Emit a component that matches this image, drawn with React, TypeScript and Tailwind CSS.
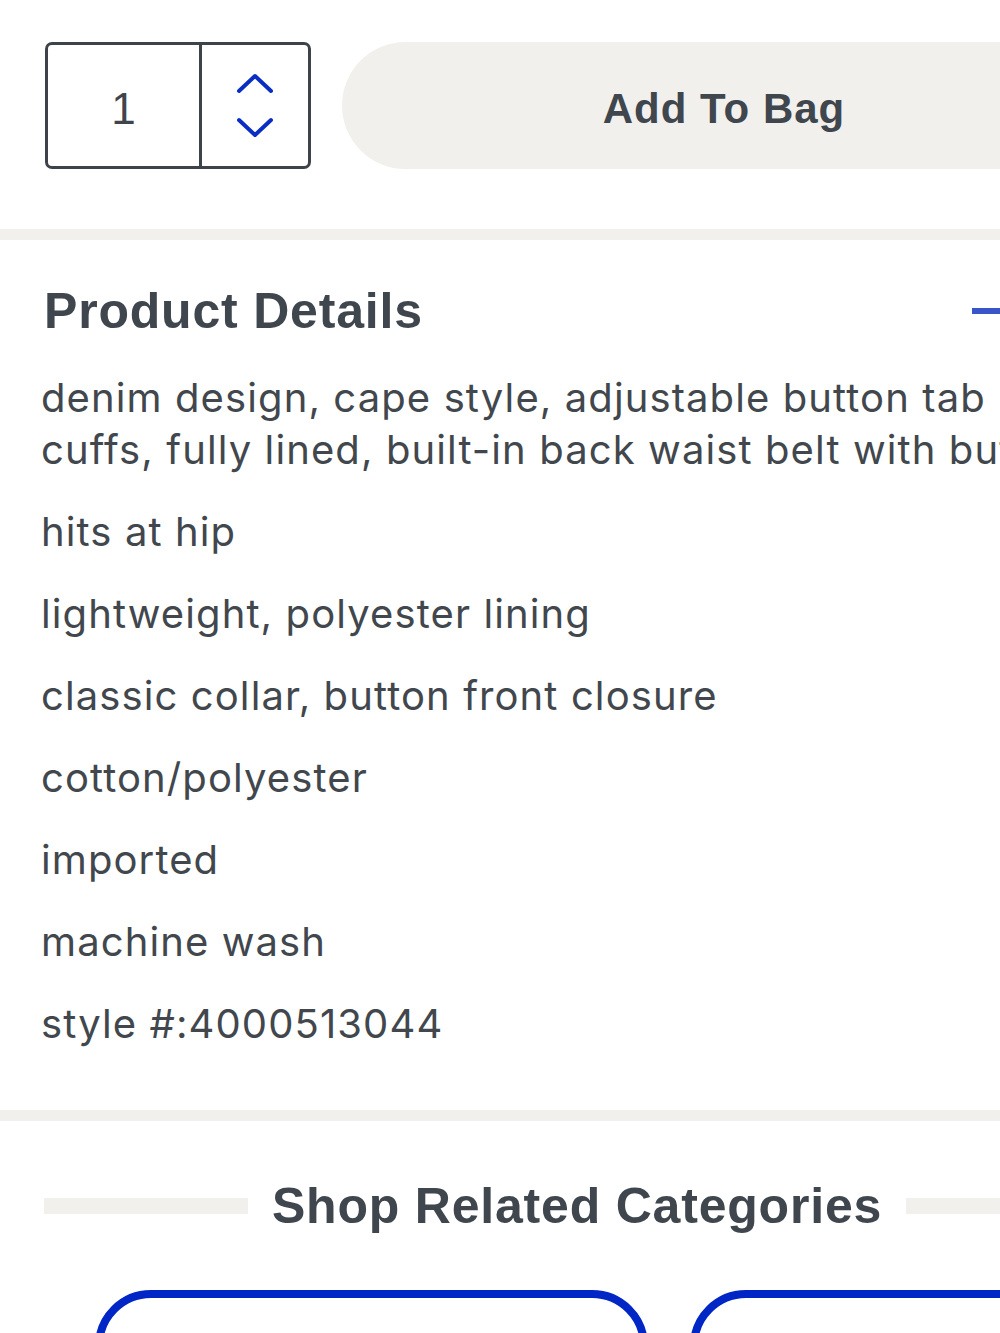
import React from "react";

const items = [
  "hits at hip",
  "lightweight, polyester lining",
  "classic collar, button front closure",
  "cotton/polyester",
  "imported",
  "machine wash",
  "style #:4000513044",
];

function Chevron({ up }: { up?: boolean }) {
  return (
    <svg width="38" height="22" viewBox="0 0 38 22" fill="none">
      <path
        d={up ? "M3 19 L19 4 L35 19" : "M3 3 L19 18 L35 3"}
        stroke="#0a2ec4"
        strokeWidth="4"
        strokeLinecap="round"
        strokeLinejoin="round"
      />
    </svg>
  );
}

export default function App() {
  const head = { fontFamily: '"Liberation Sans", Arial, sans-serif' };
  const body = { fontFamily: 'Inter, "Liberation Sans", sans-serif' };
  return (
    <div className="w-[1000px] h-[1333px] overflow-hidden bg-white">
      <div className="w-[1154px]">
        {/* Qty + Add to bag */}
        <div className="flex gap-[31px] px-[45px] pt-[42px] pb-[60px]">
          <div className="flex w-[266px] h-[127px] shrink-0 rounded-[7px] border-[3px] border-[#3d4349]">
            <div
              className="flex w-[154px] items-center justify-center border-r-[3px] border-[#3d4349] pt-[6px] text-[44px] text-[#3f454b]"
              style={head}
            >
              1
            </div>
            <div className="flex flex-1 flex-col items-center justify-center gap-[23px]">
              <Chevron up />
              <Chevron />
            </div>
          </div>
          <div
            className="flex h-[127px] w-[764px] shrink-0 items-center justify-center rounded-full bg-[#f1f0ed] pt-[6px] text-[42px] font-bold tracking-[1px] text-[#3f464d]"
            style={head}
          >
            Add To Bag
          </div>
        </div>

        <div className="h-[11px] w-full bg-[#f1f0ed]" />

        {/* Product details */}
        <div className="px-[44px] pt-[46px] pb-[60px]">
          <div className="flex w-[968px] items-center justify-between">
            <h2
              className="text-[50px] leading-[50px] font-bold tracking-[0.8px] text-[#3f464d]"
              style={head}
            >
              Product Details
            </h2>
            <div className="h-[6px] w-[40px] bg-[#3a55c8]" />
          </div>
          <div
            className="mt-[36px] -ml-[3px] flex flex-col gap-[30px] text-[40px] leading-[52px] tracking-[1.1px] whitespace-nowrap text-[#41474d]"
            style={body}
          >
            <p>
              denim design, cape style, adjustable button tab
              <br />
              cuffs, fully lined, built-in back waist belt with button closure
            </p>
            {items.map((t) => (
              <p key={t}>{t}</p>
            ))}
          </div>
        </div>

        <div className="h-[11px] w-full bg-[#f1f0ed]" />

        {/* Shop related categories */}
        <div className="px-[44px] pt-[60px]">
          <div className="flex items-center gap-[24px]">
            <div className="h-[16px] flex-1 bg-[#f1f0ed]" />
            <h2
              className="text-[50px] leading-[50px] font-bold tracking-[0.8px] text-[#3f464d]"
              style={head}
            >
              Shop Related Categories
            </h2>
            <div className="h-[16px] flex-1 bg-[#f1f0ed]" />
          </div>
          <div className="mt-[59px] ml-[51px] flex gap-[42px]">
            <div className="h-[300px] w-[553px] shrink-0 rounded-[56px] border-[8px] border-[#0026c6]" />
            <div className="h-[300px] w-[553px] shrink-0 rounded-[56px] border-[8px] border-[#0026c6]" />
          </div>
        </div>
      </div>
    </div>
  );
}
